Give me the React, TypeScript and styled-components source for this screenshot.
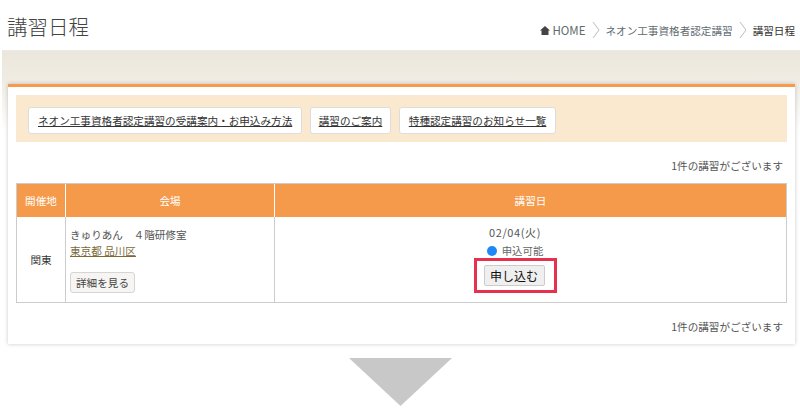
import * as React from "react";
import styled, { createGlobalStyle } from "styled-components";

const GlobalStyle = createGlobalStyle`
  html, body {
    margin: 0;
    padding: 0;
    background: #fff;
    overflow: hidden;
  }
  body {
    font-family: "Noto Sans CJK JP", "Noto Sans", sans-serif;
    color: #444;
    font-size: 11px;
  }
`;

const Page = styled.div`
  width: 800px;
  height: 414px;
  display: flex;
  flex-direction: column;
`;

const Header = styled.header`
  height: 51px;
  box-sizing: border-box;
  display: flex;
  justify-content: space-between;
  align-items: flex-start;
  padding: 0 5px 0 7px;
`;

const Title = styled.h1`
  margin: 11px 0 0;
  font-size: 20.5px;
  line-height: 30px;
  font-weight: 300;
  color: #444;
`;

const Crumbs = styled.nav`
  margin-top: 21px;
  height: 18px;
  display: flex;
  align-items: center;
  font-size: 10.6px;
  color: #5f6b70;
`;

const Crumb = styled.span<{ $current?: boolean }>`
  display: inline-flex;
  align-items: center;
  gap: 2px;
  color: ${props => (props.$current ? "#333" : "#5f6b70")};
`;

const Home = styled.span`
  font-size: 11.5px;
`;

const Separator = styled.svg`
  width: 8px;
  height: 18px;
  margin: 0 6px;
  fill: none;
  stroke: #bbb;
  stroke-width: 1;
`;

const Band = styled.main`
  margin-left: 2px;
  padding: 33px 5px 0 6px;
  background: linear-gradient(#ebe7dc 0, #f0ece3 30px, #fff 80px, #fff 100%);
  border-top: 1px solid #eeeae2;
  margin-top: -1px;
`;

const Card = styled.section`
  background: #fff;
  border-top: 3px solid #f79a4b;
  box-shadow: 0 0 4px rgba(0, 0, 0, 0.22);
  padding: 8px 8px 0;
  height: 260px;
  box-sizing: border-box;
`;

const Banner = styled.div`
  height: 47px;
  box-sizing: border-box;
  background: #fbe9cf;
  display: flex;
  align-items: center;
  gap: 8px;
  padding: 3px 12px 0;
`;

const BannerLink = styled.a<{ $pad: number }>`
  height: 27px;
  box-sizing: border-box;
  display: flex;
  align-items: center;
  padding: 0 ${props => props.$pad}px;
  background: #fff;
  border: 1px solid #ddd;
  border-radius: 3px;
  color: #333;
  font-size: 10.6px;
  text-decoration: underline;
  white-space: nowrap;
`;

const Count = styled.p<{ $top: number }>`
  margin: ${props => props.$top}px 0 0;
  height: 18px;
  line-height: 18px;
  padding-right: 4px;
  text-align: right;
  font-size: 10.6px;
  color: #555;
`;

const Table = styled.div`
  margin-top: 8px;
  display: grid;
  grid-template-columns: 48px 209px 1fr;
  grid-template-rows: 33px 85px;
  border: 1px solid #ccc;
  box-sizing: border-box;
  height: 120px;
`;

const HeadCell = styled.div`
  background: #f59a4a;
  color: #fff;
  display: flex;
  align-items: center;
  justify-content: center;
  font-size: 10.6px;
  border-left: 1px solid #fff;

  &:first-child {
    border-left: none;
  }
`;

const BodyCell = styled.div<{ $first?: boolean }>`
  border-left: ${props => (props.$first ? "none" : "1px solid #ccc")};
`;

const AreaCell = styled(BodyCell)`
  display: flex;
  align-items: center;
  justify-content: center;
  font-size: 10.6px;
  color: #333;
`;

const VenueCell = styled(BodyCell)`
  padding: 10px 4px 0;
  font-size: 10.6px;
  line-height: 16px;
  color: #555;
`;

const VenueName = styled.div`
  white-space: pre;
`;

const Address = styled.a`
  display: inline-block;
  color: #7a6a3a;
  text-decoration: underline;
`;

const DetailButton = styled.button`
  display: block;
  margin-top: 13px;
  height: 21px;
  width: 65px;
  padding: 0;
  background: #f6f5f3;
  border: 1px solid #d5d5d5;
  border-radius: 3px;
  font: inherit;
  font-size: 10.6px;
  color: #444;
`;

const DateCell = styled(BodyCell)`
  display: flex;
  flex-direction: column;
  align-items: center;
  padding: 7px 31px 0 0;
  color: #555;
`;

const DateText = styled.div`
  font-size: 11px;
  line-height: 16px;
  letter-spacing: 0.6px;
`;

const Status = styled.div`
  margin-top: 3px;
  display: flex;
  align-items: center;
  gap: 5px;
  font-size: 10.4px;
  line-height: 16px;
  color: #666;
`;

const Dot = styled.span`
  width: 10px;
  height: 10px;
  border-radius: 50%;
  background: #1e88f5;
`;

const Highlight = styled.div`
  margin-top: -1px;
  width: 83px;
  height: 35px;
  box-sizing: border-box;
  border: 3px solid #e8304f;
  padding-right: 2px;
  display: flex;
  align-items: center;
  justify-content: center;
`;

const ApplyButton = styled.button`
  width: 61px;
  height: 21px;
  padding: 0;
  background: #efefef;
  border: 1px solid #ccc;
  border-radius: 2px;
  font: inherit;
  font-size: 12px;
  line-height: 18px;
  color: #111;
`;

const Arrow = styled.svg`
  display: block;
  margin: 14px 0 0 349px;
  width: 103px;
  height: 48px;
  fill: #c8c8c8;
`;

function Chevron() {
  return (
    <Separator viewBox="0 0 8 18">
      <path d="M1 1 L7 9 L1 17" />
    </Separator>
  );
}

export default function App() {
  return (
    <Page>
      <GlobalStyle />
      <Header>
        <Title>講習日程</Title>
        <Crumbs>
          <Crumb>
            <svg width="10" height="9" viewBox="0 0 10 9" fill="#444">
              <path d="M5 0 L10 4.5 L8.5 4.5 L8.5 9 L1.5 9 L1.5 4.5 L0 4.5 Z" />
            </svg>
            <Home>HOME</Home>
          </Crumb>
          <Chevron />
          <Crumb>ネオン工事資格者認定講習</Crumb>
          <Chevron />
          <Crumb $current>講習日程</Crumb>
        </Crumbs>
      </Header>
      <Band>
        <Card>
          <Banner>
            <BannerLink $pad={9}>ネオン工事資格者認定講習の受講案内・お申込み方法</BannerLink>
            <BannerLink $pad={7.5}>講習のご案内</BannerLink>
            <BannerLink $pad={9}>特種認定講習のお知らせ一覧</BannerLink>
          </Banner>
          <Count $top={15}>1件の講習がございます</Count>
          <Table>
            <HeadCell>開催地</HeadCell>
            <HeadCell>会場</HeadCell>
            <HeadCell>講習日</HeadCell>
            <AreaCell $first>関東</AreaCell>
            <VenueCell>
              <VenueName>きゅりあん　４階研修室</VenueName>
              <Address>東京都 品川区</Address>
              <DetailButton>詳細を見る</DetailButton>
            </VenueCell>
            <DateCell>
              <DateText>02/04(火)</DateText>
              <Status>
                <Dot />
                申込可能
              </Status>
              <Highlight>
                <ApplyButton>申し込む</ApplyButton>
              </Highlight>
            </DateCell>
          </Table>
          <Count $top={15}>1件の講習がございます</Count>
        </Card>
      </Band>
      <Arrow viewBox="0 0 103 48">
        <polygon points="0,0 103,0 51.5,48" />
      </Arrow>
    </Page>
  );
}
